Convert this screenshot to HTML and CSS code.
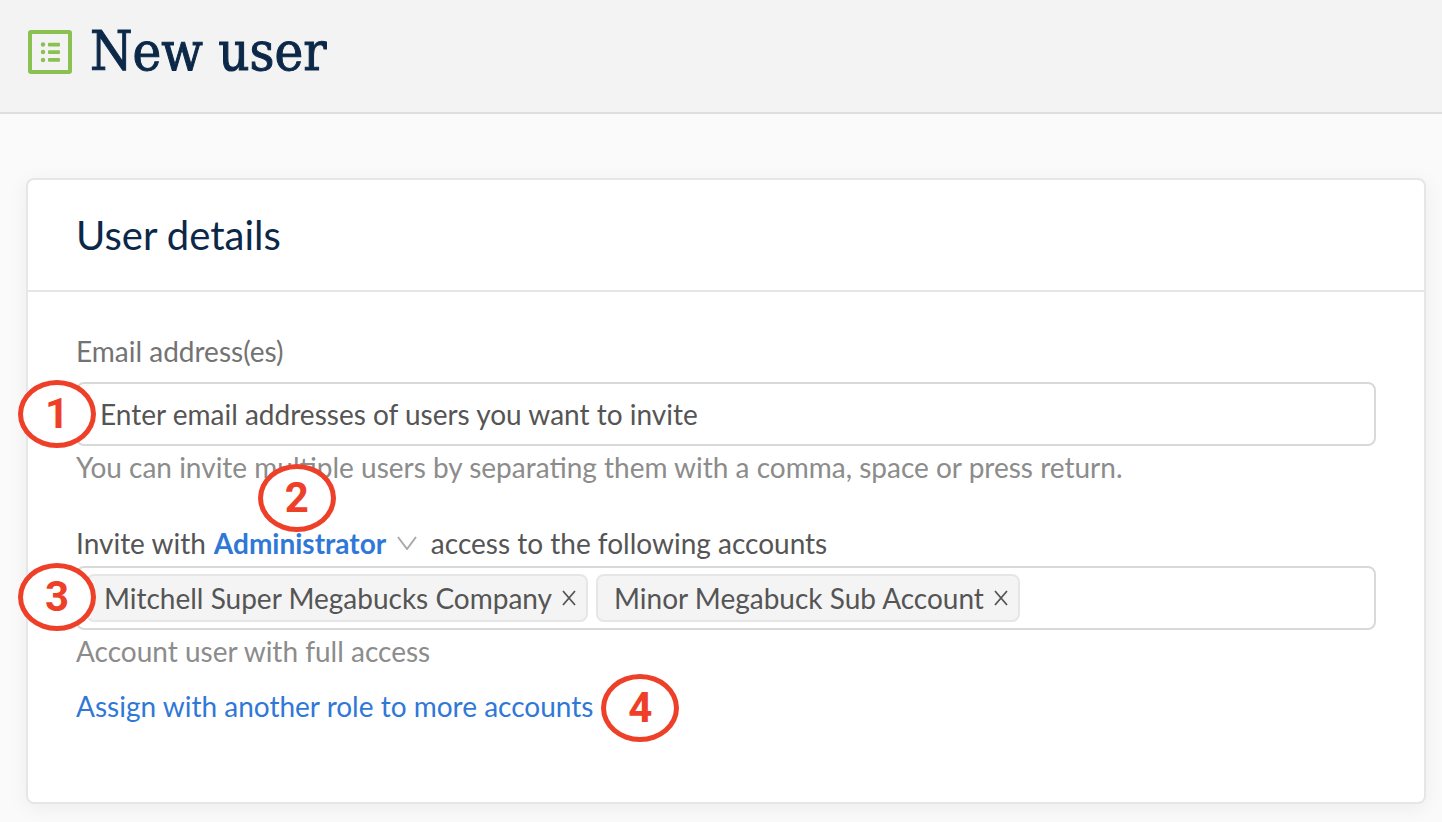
FILE: index.html
```html
<!DOCTYPE html>
<html lang="en">
<head>
<meta charset="UTF-8" />
<meta name="viewport" content="width=device-width, initial-scale=1" />
<title>New user</title>
<link rel="stylesheet" href="styles.css">
</head>
<body>

<header class="page-header">
  <svg class="page-icon" viewBox="0 0 44 44" aria-hidden="true">
    <rect x="2" y="2" width="40" height="40" rx="1" fill="none" stroke="#8bc053" stroke-width="4" />
    <g fill="#8bc053">
      <circle cx="15" cy="14.5" r="2.2" />
      <circle cx="15" cy="22" r="2.2" />
      <circle cx="15" cy="30" r="2.2" />
      <rect x="20" y="12.8" width="12" height="3.6" rx="1" />
      <rect x="20" y="20.3" width="12" height="3.6" rx="1" />
      <rect x="20" y="28.1" width="12" height="3.6" rx="1" />
    </g>
  </svg>
  <h1>New user</h1>
</header>

<main>
  <form class="card">
    <h2 class="card-title">User details</h2>

    <div class="card-body">
      <label class="field-label" for="emails">Email address(es)</label>
      <div class="field">
        <input class="text-input" id="emails" type="text" placeholder="Enter email addresses of users you want to invite" />
        <span class="step step-side">1</span>
      </div>
      <p class="hint">You can invite multiple users by separating them with a comma, space or press return.</p>

      <div class="role-row">
        <label for="role">Invite with</label>
        <div class="role">
          <select id="role">
            <option>Administrator</option>
          </select>
          <svg class="chevron" viewBox="0 0 20 14" aria-hidden="true">
            <path d="M1 1 L10 13 L19 1" fill="none" stroke="#aaa" stroke-width="2" />
          </svg>
          <span class="step step-above">2</span>
        </div>
        <label for="accounts">access to the following accounts</label>
      </div>

      <div class="field tag-box">
        <span class="tag">
          Mitchell Super Megabucks Company
          <button type="button" aria-label="Remove Mitchell Super Megabucks Company">
            <svg viewBox="0 0 14 16" aria-hidden="true"><path d="M1 1 L13 15 M13 1 L1 15" stroke="#555" stroke-width="1.8" /></svg>
          </button>
        </span>
        <span class="tag">
          Minor Megabuck Sub Account
          <button type="button" aria-label="Remove Minor Megabuck Sub Account">
            <svg viewBox="0 0 14 16" aria-hidden="true"><path d="M1 1 L13 15 M13 1 L1 15" stroke="#555" stroke-width="1.8" /></svg>
          </button>
        </span>
        <input class="tag-input" id="accounts" type="text" />
        <span class="step step-side">3</span>
      </div>
      <p class="hint">Account user with full access</p>

      <div class="more-row">
        <a href="#">Assign with another role to more accounts</a>
        <span class="step">4</span>
      </div>
    </div>
  </form>
</main>

</body>
</html>
```
FILE: styles.css
```css
* {
  box-sizing: border-box;
}
body {
  margin: 0;
  font-family: Lato, sans-serif;
  font-size: 28px;
  line-height: 42px;
  background: #fafafa;
  color: #555;
}
h1, h2, p {
  margin: 0;
}

.page-header {
  display: flex;
  align-items: center;
  gap: 18px;
  padding: 0 28px 8px;
  height: 114px;
  background: #f3f3f3;
  border-bottom: 2px solid #dedede;
}
.page-icon {
  width: 44px;
  height: 44px;
}
.page-header h1 {
  font-family: "Roboto Slab", "DejaVu Serif Condensed", "DejaVu Serif", serif;
  font-size: 54px;
  font-weight: 400;
  line-height: 72px;
  color: #0c2848;
  -webkit-text-stroke: 1px #0c2848;
}

main {
  padding: 64px 16px 18px 26px;
}
.card {
  background: #fff;
  border: 2px solid #e6e6e6;
  border-radius: 8px;
  box-shadow: 0 4px 20px rgba(0, 0, 0, 0.06);
}
.card-title {
  padding: 0 48px;
  font-size: 40px;
  font-weight: 400;
  line-height: 110px;
  color: #0c2848;
  border-bottom: 2px solid #e6e6e6;
}
.card-body {
  padding: 38px 48px 60px;
}

.field-label {
  display: block;
  margin-bottom: 10px;
  color: #737373;
}
.field {
  position: relative;
}
.text-input {
  display: block;
  width: 100%;
  height: 64px;
  padding: 0 22px;
  font: inherit;
  color: #555;
  background: #fff;
  border: 2px solid #d9d9d9;
  border-radius: 8px;
}
.text-input::placeholder {
  color: #555;
  opacity: 1;
}
.hint {
  color: #8c8c8c;
}

.role-row {
  display: flex;
  gap: 8px;
  margin: 34px 0 2px;
}
.role {
  position: relative;
  display: flex;
  align-items: center;
  gap: 10px;
  margin-right: 6px;
}
.role select {
  appearance: none;
  padding: 0;
  font: inherit;
  font-weight: 700;
  color: #2f78d7;
  background: none;
  border: none;
  cursor: pointer;
}
.chevron {
  width: 20px;
  height: 14px;
}

.tag-box {
  display: flex;
  align-items: center;
  gap: 8px;
  min-height: 64px;
  padding: 6px 8px;
  border: 2px solid #d9d9d9;
  border-radius: 8px;
}
.tag {
  display: flex;
  align-items: center;
  gap: 10px;
  height: 48px;
  padding: 0 10px 0 16px;
  background: #f4f4f4;
  border: 2px solid #e6e6e6;
  border-radius: 8px;
  white-space: nowrap;
}
.tag button {
  display: flex;
  padding: 0;
  background: none;
  border: none;
  cursor: pointer;
}
.tag svg {
  width: 14px;
  height: 16px;
}
.tag-input {
  flex: 1;
  min-width: 0;
  font: inherit;
  background: none;
  border: none;
}

.more-row {
  display: flex;
  align-items: center;
  gap: 8px;
  margin-top: 2px;
}
.more-row a {
  padding-bottom: 4px;
  color: #2f78d7;
  text-decoration: none;
}

/* numbered callouts */
.step {
  display: flex;
  align-items: center;
  justify-content: center;
  width: 78px;
  height: 68px;
  font-family: Roboto, sans-serif;
  font-size: 42px;
  font-weight: 700;
  color: #ee4028;
  background: #fff;
  border: 5px solid #ee4028;
  border-radius: 50%;
}
.step-side {
  position: absolute;
  top: -2px;
  left: -58px;
}
.tag-box .step-side {
  top: -5px;
  left: -60px;
}
.step-above {
  position: absolute;
  bottom: 32px;
  left: 44px;
}
```
